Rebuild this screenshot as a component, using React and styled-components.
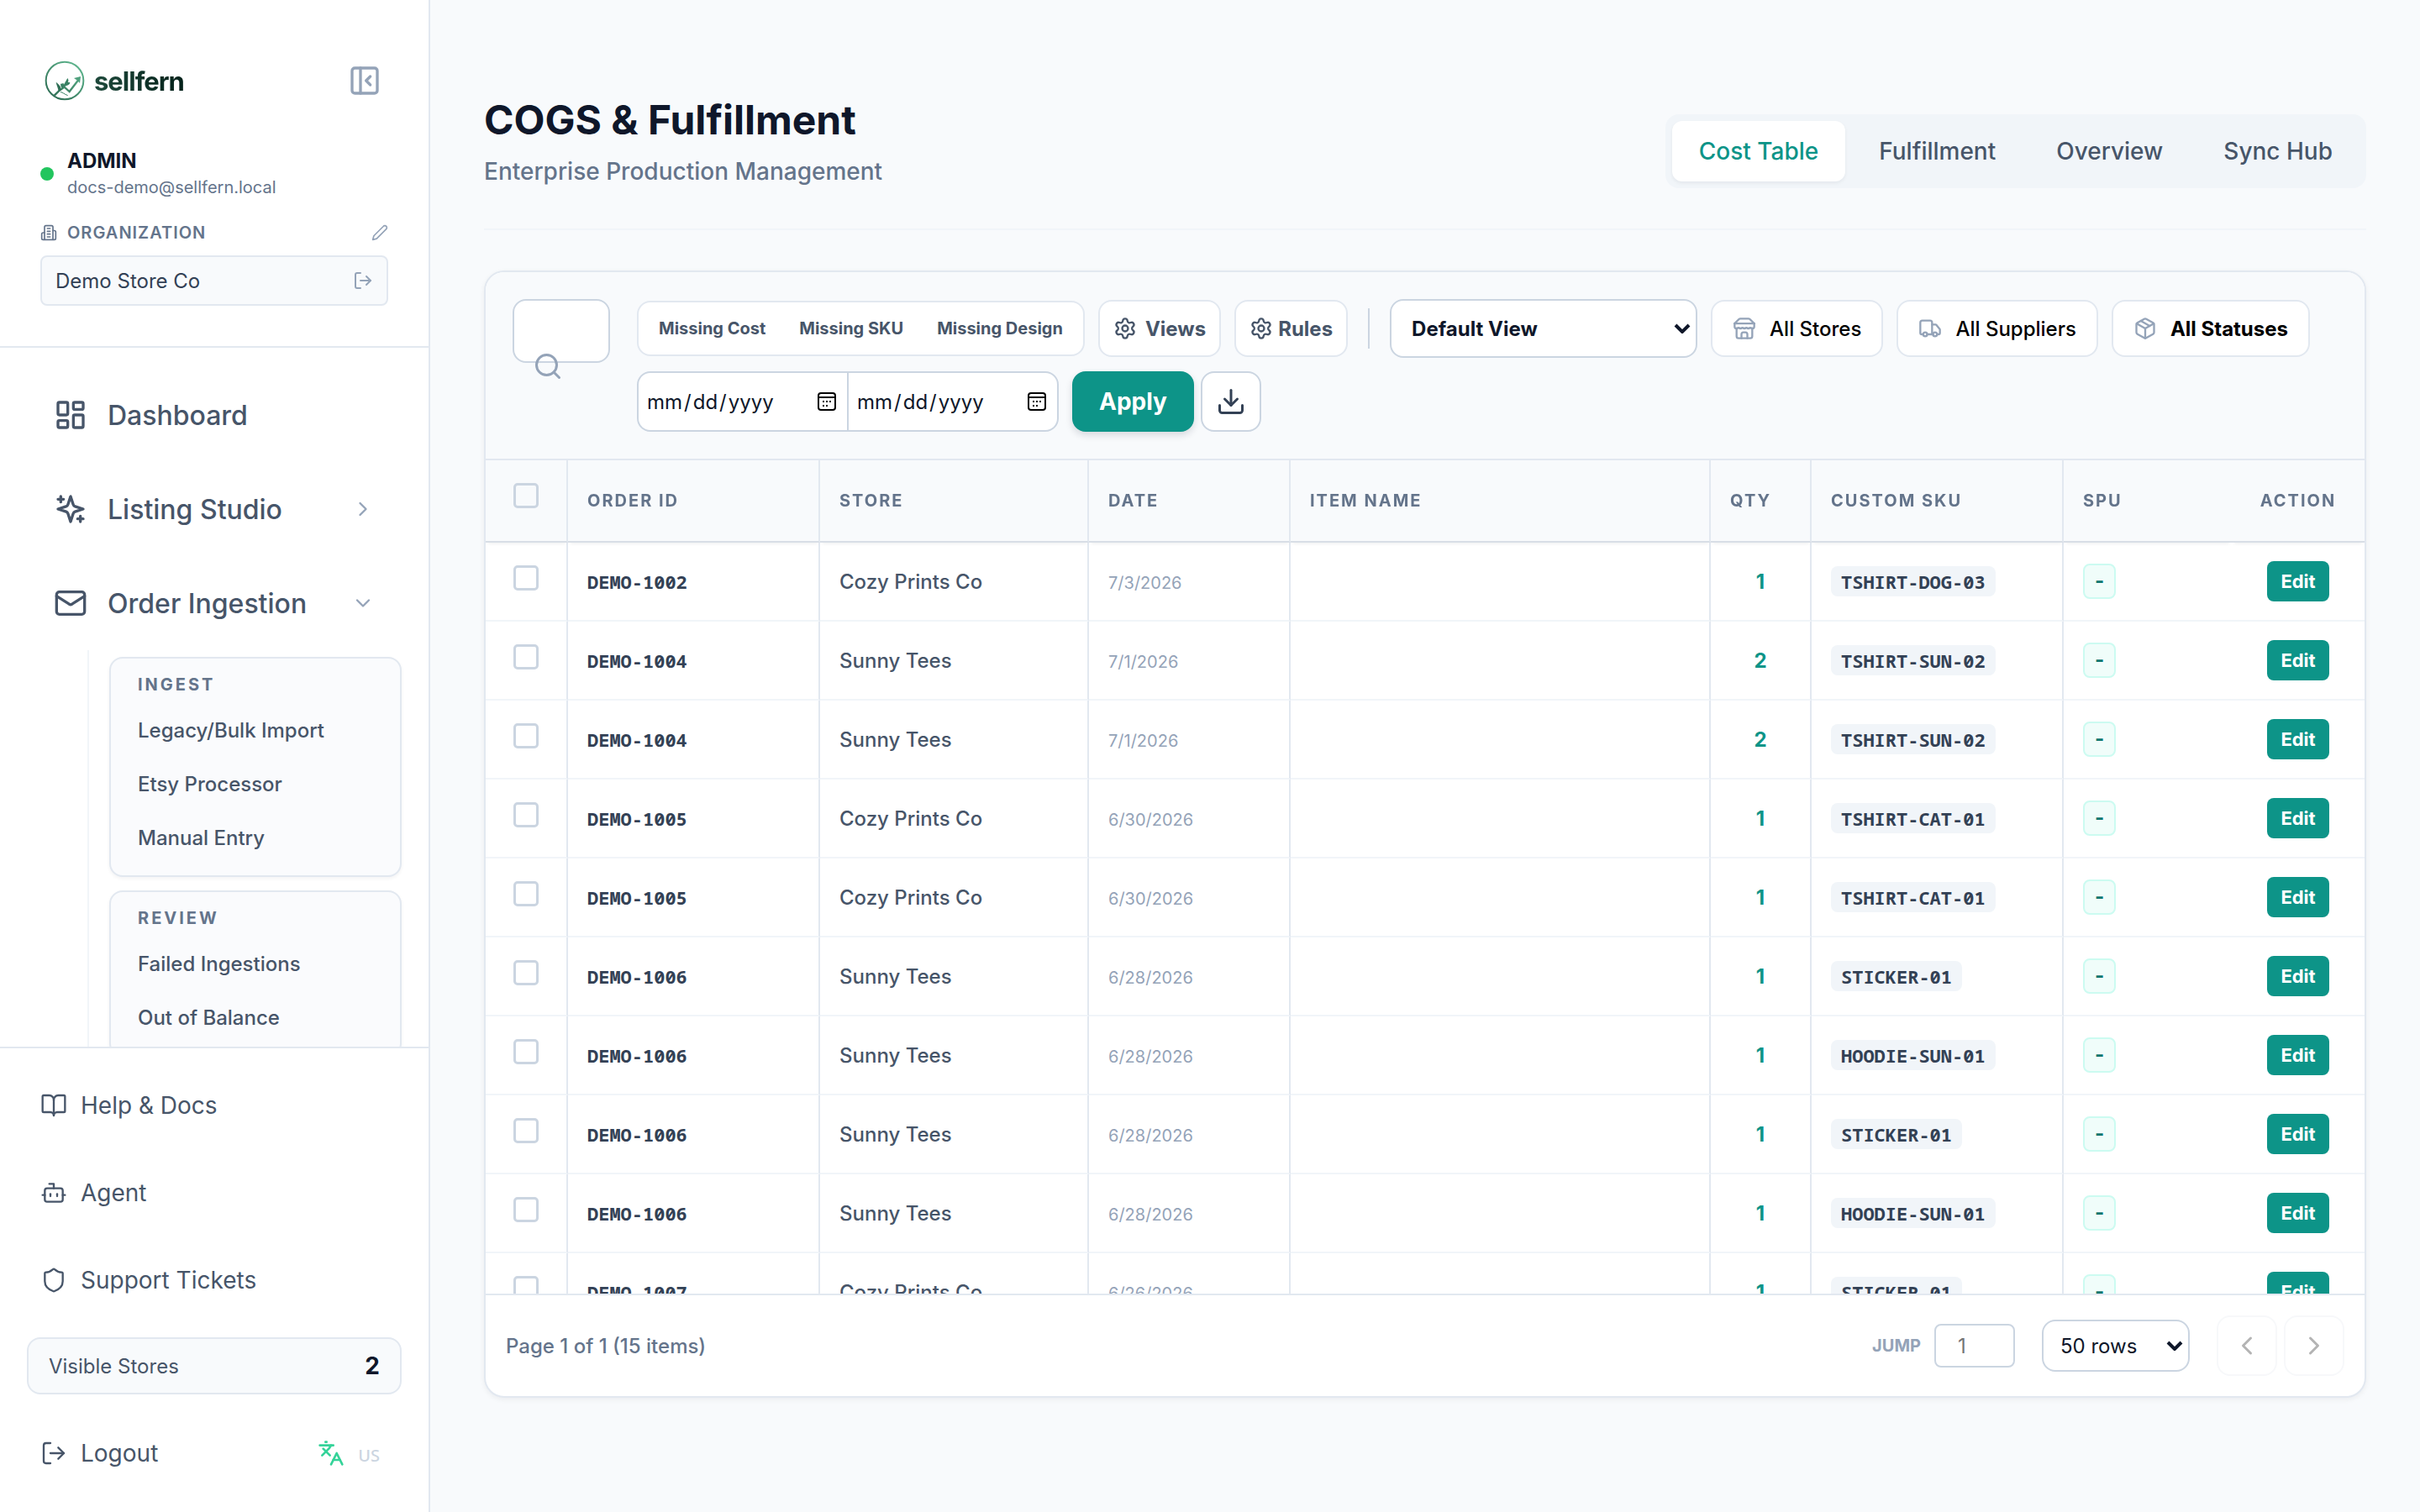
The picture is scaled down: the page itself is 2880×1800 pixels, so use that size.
import React from 'react';
import styled, { createGlobalStyle, css } from 'styled-components';
import {
    BookOpen,
    Bot,
    ChevronDown,
    ChevronLeft,
    ChevronRight,
    Download,
    Languages,
    LayoutDashboard,
    LogOut,
    Mail,
    Package,
    PanelLeftClose,
    Search,
    Settings,
    Shield,
    Truck,
} from 'lucide-react';

const GlobalStyle = createGlobalStyle`
    :root {
        --color-text: #0f172a;
        --color-body: #475569;
        --color-strong: #334155;
        --color-muted: #64748b;
        --color-faint: #94a3b8;
        --color-accent: #0d9488;
        --surface: #f8fafc;
        --surface-2: #f1f5f9;
        --border: #e2e8f0;
        --border-strong: #cbd5e1;
        --font-mono: 'Noto Sans Mono', 'DejaVu Sans Mono', 'Liberation Mono', monospace;
    }

    * {
        box-sizing: border-box;
    }

    body {
        margin: 0;
        background: var(--surface);
        color: var(--color-text);
        font-family: Inter, 'Liberation Sans', sans-serif;
        font-size: 24px;
    }

    button, input, select {
        font-family: inherit;
        margin: 0;
    }

    button {
        cursor: pointer;
    }

    a {
        color: inherit;
        text-decoration: none;
    }
`;

const Layout = styled.div`
    display: flex;
    height: 100vh;
`;

/* ---------- Sidebar ---------- */

const Sidebar = styled.aside`
    display: flex;
    flex-direction: column;
    flex: 0 0 512px;
    background: #fff;
    border-right: 2px solid var(--border);
`;

const SidebarHeader = styled.div`
    padding: 48px;
    border-bottom: 2px solid var(--border);
`;

const BrandRow = styled.div`
    display: flex;
    align-items: center;
    justify-content: space-between;
    height: 96px;
`;

const Brand = styled.a`
    display: flex;
    align-items: center;
    gap: 10px;
    padding-left: 4px;
`;

const BrandName = styled.span`
    font-size: 31px;
    font-weight: 700;
    letter-spacing: -1px;
    background: linear-gradient(90deg, #1f4a3c, #04211a);
    background-clip: text;
    color: transparent;
`;

const IconButton = styled.button`
    display: flex;
    align-items: center;
    justify-content: center;
    width: 56px;
    height: 56px;
    padding: 0;
    border: 0;
    background: transparent;
    color: var(--color-faint);
`;

const UserRow = styled.div`
    display: flex;
    align-items: center;
    gap: 16px;
    margin-top: 32px;
`;

const StatusDot = styled.span`
    width: 16px;
    height: 16px;
    border-radius: 50%;
    background: #22c55e;
`;

const UserName = styled.div`
    font-size: 24px;
    line-height: 32px;
    font-weight: 700;
`;

const UserEmail = styled.div`
    font-size: 20px;
    line-height: 30px;
    color: var(--color-muted);
`;

const OrgRow = styled.div`
    display: flex;
    align-items: center;
    gap: 12px;
    height: 28px;
    margin-top: 25px;
    color: var(--color-muted);
`;

const OrgLabel = styled.span`
    flex: 1;
    font-size: 20px;
    font-weight: 600;
    letter-spacing: 1px;
`;

const SmallButton = styled.button`
    display: flex;
    padding: 0;
    border: 0;
    background: transparent;
    color: var(--color-faint);
`;

const OrgBox = styled.div`
    display: flex;
    align-items: center;
    justify-content: space-between;
    height: 60px;
    margin-top: 13px;
    padding: 0 16px;
    border: 2px solid var(--border);
    border-radius: 8px;
    background: var(--surface);
    color: var(--color-strong);
    font-size: 24px;
`;

const Nav = styled.nav`
    flex: 1;
    min-height: 0;
    padding-top: 24px;
    overflow-y: auto;
    scrollbar-width: none;
`;

const NavItem = styled.a`
    display: flex;
    align-items: center;
    gap: 24px;
    height: 112px;
    padding: 0 64px;
    color: var(--color-body);
    font-size: 32px;
    font-weight: 500;

    span {
        flex: 1;
    }
`;

const NavChevron = styled.i`
    display: flex;
    color: var(--color-faint);
`;

const SubNav = styled.div`
    display: flex;
    flex-direction: column;
    gap: 16px;
    margin-left: 104px;
    padding: 8px 32px 8px 24px;
    border-left: 2px solid var(--surface-2);
`;

const SubCard = styled.div`
    padding: 12px;
    border: 2px solid var(--border);
    border-radius: 16px;
    background: #fafbfd;
    box-shadow: 0 2px 4px rgba(15, 23, 42, 0.05);
`;

const SubTitle = styled.div`
    padding: 4px 20px 8px;
    color: var(--color-muted);
    font-size: 20px;
    line-height: 30px;
    font-weight: 700;
    letter-spacing: 3px;
`;

const SubLink = styled.a`
    display: flex;
    align-items: center;
    height: 64px;
    padding: 0 20px 2px;
    color: var(--color-body);
    font-size: 24px;
    font-weight: 500;
`;

const SidebarFooter = styled.div`
    padding: 16px 32px;
    border-top: 2px solid var(--border);
`;

const FooterItem = styled.a`
    display: flex;
    align-items: center;
    gap: 16px;
    height: 104px;
    padding: 0 16px;
    color: var(--color-body);
    font-size: 28px;
`;

const VisibleStores = styled.div`
    display: flex;
    align-items: center;
    justify-content: space-between;
    height: 68px;
    margin: 16px 0;
    padding: 0 24px;
    border: 2px solid var(--border);
    border-radius: 16px;
    background: var(--surface);
    color: var(--color-body);
    font-size: 24px;

    strong {
        color: var(--color-text);
        font-size: 28px;
        font-weight: 700;
    }
`;

const LogoutRow = styled.div`
    display: flex;
    align-items: center;
    justify-content: space-between;
    height: 108px;
`;

const LanguageButton = styled.button`
    display: flex;
    align-items: flex-end;
    gap: 16px;
    padding: 0 26px 0 0;
    border: 0;
    background: transparent;
    color: var(--border-strong);
    font-family: 'Noto Sans', Inter, sans-serif;
    font-size: 20px;
    font-weight: 500;

    svg {
        color: #34d399;
    }
`;

/* ---------- Main ---------- */

const Main = styled.main`
    display: flex;
    flex-direction: column;
    flex: 1;
    min-width: 0;
    padding: 114px 64px 136px;
`;

const PageHeader = styled.header`
    display: flex;
    align-items: flex-end;
    justify-content: space-between;
    padding-bottom: 48px;
    border-bottom: 2px solid var(--surface-2);
`;

const PageTitle = styled.h1`
    margin: 0 0 12px;
    font-size: 48px;
    line-height: 58px;
    font-weight: 700;
`;

const PageSubtitle = styled.p`
    margin: 0;
    color: var(--color-muted);
    font-size: 28px;
    line-height: 40px;
    font-weight: 500;
`;

const Tabs = styled.div`
    display: flex;
    gap: 8px;
    padding: 8px;
    border-radius: 16px;
    background: var(--surface-2);
`;

const Tab = styled.button`
    height: 72px;
    padding: 0 32px;
    border: 0;
    border-radius: 12px;
    background: ${({ $active }) => ($active ? '#fff' : 'transparent')};
    box-shadow: ${({ $active }) => ($active ? '0 2px 4px rgba(15, 23, 42, 0.06)' : 'none')};
    color: ${({ $active }) => ($active ? 'var(--color-accent)' : 'var(--color-body)')};
    font-size: 28px;
    font-weight: 500;
`;

const Card = styled.section`
    display: flex;
    flex-direction: column;
    flex: 1;
    min-height: 0;
    margin-top: 48px;
    border: 2px solid var(--border);
    border-radius: 24px;
    background: #fff;
    box-shadow: 0 2px 6px rgba(15, 23, 42, 0.06);
    overflow: hidden;
`;

const Toolbar = styled.div`
    display: flex;
    align-items: flex-start;
    gap: 32px;
    padding: 32px;
    border-bottom: 2px solid var(--border);
    background: var(--surface);
`;

const SearchBox = styled.label`
    position: relative;
    flex: 0 0 116px;

    svg {
        position: absolute;
        top: 62px;
        left: 24px;
        color: var(--color-faint);
    }
`;

const SearchInput = styled.input`
    display: block;
    width: 100%;
    height: 76px;
    padding: 0 16px;
    border: 2px solid var(--border-strong);
    border-radius: 16px;
    background: #fff;
    font-size: 24px;
`;

const Filters = styled.div`
    display: flex;
    flex-wrap: wrap;
    align-items: center;
    gap: 16px;
`;

const Segment = styled.div`
    display: flex;
    gap: 8px;
    height: 66px;
    padding: 0 8px;
    border: 2px solid var(--border);
    border-radius: 16px;
    background: #fff;
`;

const SegmentButton = styled.button`
    padding: 0 16px;
    border: 0;
    background: transparent;
    color: var(--color-body);
    font-size: 20px;
    font-weight: 700;
`;

const ToolButton = styled.button`
    display: flex;
    align-items: center;
    gap: ${({ $gap }) => $gap || '10px'};
    height: 68px;
    padding: 0 16px;
    border: 2px solid var(--border);
    border-radius: 16px;
    background: #fff;
    color: var(--color-body);
    font-size: 24px;
    font-weight: 700;
`;

const FilterButton = styled(ToolButton)`
    gap: 16px;
    padding: 0 24px;
    color: #000;
    font-weight: ${({ $strong }) => ($strong ? 700 : 500)};

    svg {
        color: var(--color-faint);
    }
`;

const Divider = styled.span`
    width: 2px;
    height: 48px;
    margin: 0 8px;
    background: var(--border-strong);
`;

const SelectWrap = styled.span`
    position: relative;
    display: flex;
    width: ${({ $width }) => $width};

    svg {
        position: absolute;
        top: 50%;
        right: 8px;
        margin-top: -6px;
        pointer-events: none;
    }
`;

const Select = styled.select`
    width: 100%;
    height: ${({ $compact }) => ($compact ? '62px' : '70px')};
    padding: 0 ${({ $compact }) => ($compact ? '20px' : '24px')};
    border: 2px solid var(--border-strong);
    border-radius: 16px;
    background: #fff;
    color: var(--color-text);
    font-size: 24px;
    font-weight: ${({ $compact }) => ($compact ? 400 : 700)};
    appearance: none;
`;

const DateRange = styled.div`
    display: flex;
    width: 502px;
    height: 72px;
    border: 2px solid var(--border-strong);
    border-radius: 16px;
    background: #fff;
    overflow: hidden;
`;

const DateField = styled.label`
    position: relative;
    display: flex;
    flex: 1;

    & + & {
        border-left: 2px solid var(--border-strong);
    }

    svg {
        position: absolute;
        top: 50%;
        right: 12px;
        margin-top: -11px;
        pointer-events: none;
    }
`;

const DateInput = styled.input`
    width: 100%;
    padding: 0 12px 0 8px;
    border: 0;
    background: transparent;
    color: var(--color-text);
    font-size: 24px;

    &::-webkit-calendar-picker-indicator {
        opacity: 0;
    }

    &::-webkit-datetime-edit-month-field,
    &::-webkit-datetime-edit-day-field,
    &::-webkit-datetime-edit-year-field {
        padding: 0 2px;
    }
`;

const Actions = styled.div`
    display: flex;
    gap: 8px;
`;

const ApplyButton = styled.button`
    height: 72px;
    padding: 0 32px;
    border: 0;
    border-radius: 16px;
    background: var(--color-accent);
    box-shadow: 0 4px 8px rgba(15, 23, 42, 0.14);
    color: #fff;
    font-size: 28px;
    font-weight: 700;
`;

const SquareButton = styled.button`
    display: flex;
    align-items: center;
    justify-content: center;
    width: 72px;
    height: 72px;
    padding: 0;
    border: 2px solid var(--border-strong);
    border-radius: 16px;
    background: #fff;
    color: var(--color-strong);

    &:disabled {
        border-color: #f7f8fa;
        color: #b4b4b4;
    }
`;

const TableScroll = styled.div`
    flex: 1;
    min-height: 0;
    overflow-y: auto;
    scrollbar-width: none;
`;

const Table = styled.table`
    width: 100%;
    table-layout: fixed;
    border-collapse: separate;
    border-spacing: 0;
`;

const cellBase = css`
    padding: 0 ${({ $tight }) => ($tight ? '0' : '23px')};
    border-right: ${({ $open }) => ($open ? '0' : '2px solid var(--border)')};
    text-align: ${({ $align }) => $align || 'left'};
    white-space: nowrap;
`;

const Th = styled.th`
    ${cellBase}
    position: sticky;
    top: 0;
    height: 98px;
    border-bottom: 2px solid #d8dee6;
    background: var(--surface);
    box-shadow: 0 4px 4px -3px rgba(15, 23, 42, 0.08);
    color: var(--color-muted);
    font-size: 20px;
    font-weight: 700;
    letter-spacing: 2px;
`;

const Td = styled.td`
    ${cellBase}
    height: 94px;
    border-bottom: 2px solid var(--surface-2);
    color: var(--color-body);
    font-size: 24px;
    font-weight: 500;
`;

const Checkbox = styled.input`
    display: block;
    width: 30px;
    height: 30px;
    margin: 0 auto 8px;
    border: 3px solid var(--border-strong);
    border-radius: 5px;
    appearance: none;

    th & {
        margin-bottom: 12px;
    }
`;

const OrderId = styled.span`
    color: var(--color-strong);
    font-family: var(--font-mono);
    font-size: 22px;
    font-weight: 700;
`;

const DateText = styled.span`
    color: var(--color-faint);
    font-size: 20px;
    font-weight: 400;
`;

const Qty = styled.span`
    color: var(--color-accent);
    font-weight: 700;
`;

const Sku = styled.code`
    display: inline-block;
    padding: 0 12px;
    border-radius: 8px;
    background: var(--surface-2);
    color: var(--color-strong);
    font-family: var(--font-mono);
    font-size: 22px;
    line-height: 36px;
    font-weight: 700;
`;

const Spu = styled.span`
    display: inline-block;
    padding: 0 12px;
    border: 2px solid #ccfbf1;
    border-radius: 8px;
    background: #f0fdfa;
    color: #0f766e;
    font-size: 24px;
    line-height: 38px;
    font-weight: 700;
`;

const EditButton = styled.button`
    height: 48px;
    padding: 0 16px;
    border: 0;
    border-radius: 8px;
    background: var(--color-accent);
    color: #fff;
    font-size: 22px;
    font-weight: 700;
`;

const TableFooter = styled.footer`
    display: flex;
    align-items: center;
    justify-content: space-between;
    height: 122px;
    padding: 0 24px;
    border-top: 2px solid var(--border);
    color: var(--color-muted);
    font-size: 24px;
    font-weight: 500;
`;

const Pager = styled.div`
    display: flex;
    align-items: center;
    gap: 32px;
`;

const PagerButtons = styled.div`
    display: flex;
    gap: 8px;
`;

const Jump = styled.label`
    display: flex;
    align-items: center;
    gap: 16px;
    color: var(--color-faint);
    font-size: 20px;
    font-weight: 700;
`;

const JumpInput = styled.input`
    width: 96px;
    height: 52px;
    padding: 0 26px;
    border: 2px solid var(--border-strong);
    border-radius: 8px;
    background: #fff;
    font-size: 24px;
`;

/* ---------- Icons ---------- */

const LineIcon = ({ size, children, strokeWidth = 2 }) => (
    <svg
        width={size}
        height={size}
        viewBox="0 0 24 24"
        fill="none"
        stroke="currentColor"
        strokeWidth={strokeWidth}
        strokeLinecap="round"
        strokeLinejoin="round"
        aria-hidden="true"
    >
        {children}
    </svg>
);

const BuildingIcon = ({ size }) => (
    <LineIcon size={size}>
        <path d="M6 22V4a2 2 0 0 1 2-2h8a2 2 0 0 1 2 2v18Z" />
        <path d="M6 12H4a2 2 0 0 0-2 2v6a2 2 0 0 0 2 2h2" />
        <path d="M18 9h2a2 2 0 0 1 2 2v9a2 2 0 0 1-2 2h-2" />
        <path d="M10 6h4M10 10h4M10 14h4M10 18h4" />
    </LineIcon>
);

const PenIcon = ({ size }) => (
    <LineIcon size={size}>
        <path d="M17 3a2.85 2.83 0 1 1 4 4L7.5 20.5 2 22l1.5-5.5Z" />
    </LineIcon>
);

const SparklesIcon = ({ size }) => (
    <LineIcon size={size}>
        <path d="m12 3-1.912 5.813a2 2 0 0 1-1.275 1.275L3 12l5.813 1.912a2 2 0 0 1 1.275 1.275L12 21l1.912-5.813a2 2 0 0 1 1.275-1.275L21 12l-5.813-1.912a2 2 0 0 1-1.275-1.275L12 3Z" />
        <path d="M5 3v4M19 17v4M3 5h4M17 19h4" />
    </LineIcon>
);

const StoreIcon = ({ size }) => (
    <LineIcon size={size}>
        <path d="m2 7 4.41-4.41A2 2 0 0 1 7.83 2h8.34a2 2 0 0 1 1.42.59L22 7" />
        <path d="M4 12v8a2 2 0 0 0 2 2h12a2 2 0 0 0 2-2v-8" />
        <path d="M15 22v-4a2 2 0 0 0-2-2h-2a2 2 0 0 0-2 2v4" />
        <path d="M2 7h20" />
        <path d="M22 7v3a2 2 0 0 1-2 2a2.7 2.7 0 0 1-1.59-.63.7.7 0 0 0-.82 0A2.7 2.7 0 0 1 16 12a2.7 2.7 0 0 1-1.59-.63.7.7 0 0 0-.82 0A2.7 2.7 0 0 1 12 12a2.7 2.7 0 0 1-1.59-.63.7.7 0 0 0-.82 0A2.7 2.7 0 0 1 8 12a2.7 2.7 0 0 1-1.59-.63.7.7 0 0 0-.82 0A2.7 2.7 0 0 1 4 12a2 2 0 0 1-2-2V7" />
    </LineIcon>
);

const CalendarIcon = () => (
    <svg width="24" height="22" viewBox="0 0 24 22" fill="none" aria-hidden="true">
        <rect x="2" y="1" width="20" height="20" rx="3" stroke="#000" strokeWidth="2" />
        <path d="M2 6h20" stroke="#000" strokeWidth="2" />
        <path d="M7 11h2M11 11h2M15 11h2M7 16h2M11 16h2" stroke="#000" strokeWidth="2" />
    </svg>
);

const SelectArrow = () => (
    <svg width="20" height="12" viewBox="0 0 20 12" fill="none" aria-hidden="true">
        <path d="M2 2l8 8 8-8" stroke="#0f172a" strokeWidth="4" />
    </svg>
);

const FernLogo = () => (
    <svg width="50" height="50" viewBox="0 0 150 150" fill="none" aria-hidden="true">
        <defs>
            <linearGradient id="fern" x1="30" y1="130" x2="120" y2="20" gradientUnits="userSpaceOnUse">
                <stop offset="0" stopColor="#2f6f55" />
                <stop offset="1" stopColor="#5db38c" />
            </linearGradient>
        </defs>
        <circle cx="75" cy="75" r="67" stroke="url(#fern)" strokeWidth="6" />
        <path d="M38 128 54 112 74 98 92 114 126 70" stroke="url(#fern)" strokeWidth="7" />
        <path d="m108 66 24-6-3 24-8-9Z" fill="#4fa17d" />
        <path d="M44 80c10 8 17 14 19 28l-10 6c-1-12-7-21-9-34Z" fill="#2f6f55" />
        <path d="M60 86c4 0 8-1 10-3l2 6 13-23c5 6 3 11 2 15l7 0c-1 8-6 11-13 12l-17 9c-2-5-4-11-4-16Z" fill="#3a8265" />
        <path d="M60 116c8 0 12 7 26 12" stroke="#3a8265" strokeWidth="3" />
    </svg>
);

/* ---------- Data ---------- */

const subNav = [
    { title: 'INGEST', links: ['Legacy/Bulk Import', 'Etsy Processor', 'Manual Entry'] },
    { title: 'REVIEW', links: ['Failed Ingestions', 'Out of Balance'] },
];

const tabs = ['Cost Table', 'Fulfillment', 'Overview', 'Sync Hub'];

const orders = [
    ['DEMO-1002', 'Cozy Prints Co', '7/3/2026', 1, 'TSHIRT-DOG-03'],
    ['DEMO-1004', 'Sunny Tees', '7/1/2026', 2, 'TSHIRT-SUN-02'],
    ['DEMO-1004', 'Sunny Tees', '7/1/2026', 2, 'TSHIRT-SUN-02'],
    ['DEMO-1005', 'Cozy Prints Co', '6/30/2026', 1, 'TSHIRT-CAT-01'],
    ['DEMO-1005', 'Cozy Prints Co', '6/30/2026', 1, 'TSHIRT-CAT-01'],
    ['DEMO-1006', 'Sunny Tees', '6/28/2026', 1, 'STICKER-01'],
    ['DEMO-1006', 'Sunny Tees', '6/28/2026', 1, 'HOODIE-SUN-01'],
    ['DEMO-1006', 'Sunny Tees', '6/28/2026', 1, 'STICKER-01'],
    ['DEMO-1006', 'Sunny Tees', '6/28/2026', 1, 'HOODIE-SUN-01'],
    ['DEMO-1007', 'Cozy Prints Co', '6/26/2026', 1, 'STICKER-01'],
];

/* ---------- Sections ---------- */

const AppSidebar = () => (
    <Sidebar>
        <SidebarHeader>
            <BrandRow>
                <Brand href="#">
                    <FernLogo />
                    <BrandName>sellfern</BrandName>
                </Brand>
                <IconButton type="button" aria-label="Collapse sidebar">
                    <PanelLeftClose size={40} />
                </IconButton>
            </BrandRow>
            <UserRow>
                <StatusDot />
                <div>
                    <UserName>ADMIN</UserName>
                    <UserEmail>docs-demo@sellfern.local</UserEmail>
                </div>
            </UserRow>
            <OrgRow>
                <BuildingIcon size={20} />
                <OrgLabel>ORGANIZATION</OrgLabel>
                <SmallButton type="button" aria-label="Edit organization">
                    <PenIcon size={20} />
                </SmallButton>
            </OrgRow>
            <OrgBox>
                Demo Store Co
                <SmallButton type="button" aria-label="Leave organization">
                    <LogOut size={24} />
                </SmallButton>
            </OrgBox>
        </SidebarHeader>

        <Nav>
            <NavItem href="#">
                <LayoutDashboard size={40} />
                <span>Dashboard</span>
            </NavItem>
            <NavItem href="#">
                <SparklesIcon size={40} />
                <span>Listing Studio</span>
                <NavChevron><ChevronRight size={28} /></NavChevron>
            </NavItem>
            <NavItem href="#">
                <Mail size={40} />
                <span>Order Ingestion</span>
                <NavChevron><ChevronDown size={28} /></NavChevron>
            </NavItem>
            <SubNav>
                {subNav.map((group) => (
                    <SubCard key={group.title}>
                        <SubTitle>{group.title}</SubTitle>
                        {group.links.map((link) => (
                            <SubLink key={link} href="#">{link}</SubLink>
                        ))}
                    </SubCard>
                ))}
            </SubNav>
        </Nav>

        <SidebarFooter>
            <FooterItem href="#"><BookOpen size={32} strokeWidth={1.75} />Help &amp; Docs</FooterItem>
            <FooterItem href="#"><Bot size={32} strokeWidth={1.75} />Agent</FooterItem>
            <FooterItem href="#"><Shield size={32} strokeWidth={1.75} />Support Tickets</FooterItem>
            <VisibleStores>
                Visible Stores
                <strong>2</strong>
            </VisibleStores>
            <LogoutRow>
                <FooterItem href="#"><LogOut size={32} strokeWidth={1.75} />Logout</FooterItem>
                <LanguageButton type="button">
                    <Languages size={32} />
                    US
                </LanguageButton>
            </LogoutRow>
        </SidebarFooter>
    </Sidebar>
);

const FilterBar = () => (
    <Toolbar>
        <SearchBox>
            <SearchInput type="text" aria-label="Search orders" />
            <Search size={36} />
        </SearchBox>
        <Filters>
            <Segment>
                <SegmentButton type="button">Missing Cost</SegmentButton>
                <SegmentButton type="button">Missing SKU</SegmentButton>
                <SegmentButton type="button">Missing Design</SegmentButton>
            </Segment>
            <ToolButton type="button"><Settings size={28} />Views</ToolButton>
            <ToolButton type="button" $gap="6px"><Settings size={28} />Rules</ToolButton>
            <Divider />
            <SelectWrap $width="366px">
                <Select aria-label="Saved view" defaultValue="default">
                    <option value="default">Default View</option>
                </Select>
                <SelectArrow />
            </SelectWrap>
            <FilterButton type="button"><StoreIcon size={28} />All Stores</FilterButton>
            <FilterButton type="button"><Truck size={28} />All Suppliers</FilterButton>
            <FilterButton type="button" $strong><Package size={28} />All Statuses</FilterButton>
            <DateRange>
                <DateField>
                    <DateInput type="date" aria-label="From date" />
                    <CalendarIcon />
                </DateField>
                <DateField>
                    <DateInput type="date" aria-label="To date" />
                    <CalendarIcon />
                </DateField>
            </DateRange>
            <Actions>
                <ApplyButton type="button">Apply</ApplyButton>
                <SquareButton type="button" aria-label="Download">
                    <Download size={36} />
                </SquareButton>
            </Actions>
        </Filters>
    </Toolbar>
);

const OrdersTable = () => (
    <TableScroll>
        <Table>
            <colgroup>
                <col width="98" />
                <col width="300" />
                <col width="320" />
                <col width="240" />
                <col />
                <col width="120" />
                <col width="300" />
                <col width="200" />
                <col width="158" />
            </colgroup>
            <thead>
                <tr>
                    <Th $tight><Checkbox type="checkbox" aria-label="Select all" /></Th>
                    <Th>ORDER ID</Th>
                    <Th>STORE</Th>
                    <Th>DATE</Th>
                    <Th>ITEM NAME</Th>
                    <Th>QTY</Th>
                    <Th>CUSTOM SKU</Th>
                    <Th $open>SPU</Th>
                    <Th $open $tight $align="center">ACTION</Th>
                </tr>
            </thead>
            <tbody>
                {orders.map(([id, store, date, qty, sku], index) => (
                    <tr key={index}>
                        <Td $tight><Checkbox type="checkbox" aria-label={`Select ${id}`} /></Td>
                        <Td><OrderId>{id}</OrderId></Td>
                        <Td>{store}</Td>
                        <Td><DateText>{date}</DateText></Td>
                        <Td />
                        <Td $align="center"><Qty>{qty}</Qty></Td>
                        <Td><Sku>{sku}</Sku></Td>
                        <Td $open><Spu>-</Spu></Td>
                        <Td $open $tight $align="center"><EditButton type="button">Edit</EditButton></Td>
                    </tr>
                ))}
            </tbody>
        </Table>
    </TableScroll>
);

const Pagination = () => (
    <TableFooter>
        <span>Page 1 of 1 (15 items)</span>
        <Pager>
            <Jump>
                JUMP
                <JumpInput type="text" inputMode="numeric" placeholder="1" />
            </Jump>
            <SelectWrap $width="176px">
                <Select $compact aria-label="Rows per page" defaultValue="50">
                    <option value="50">50 rows</option>
                </Select>
                <SelectArrow />
            </SelectWrap>
            <PagerButtons>
                <SquareButton type="button" aria-label="Previous page" disabled>
                    <ChevronLeft size={36} />
                </SquareButton>
                <SquareButton type="button" aria-label="Next page" disabled>
                    <ChevronRight size={36} />
                </SquareButton>
            </PagerButtons>
        </Pager>
    </TableFooter>
);

const App = () => {
    return (
        <>
            <GlobalStyle />
            <Layout>
                <AppSidebar />
                <Main>
                    <PageHeader>
                        <div>
                            <PageTitle>COGS &amp; Fulfillment</PageTitle>
                            <PageSubtitle>Enterprise Production Management</PageSubtitle>
                        </div>
                        <Tabs>
                            {tabs.map((tab, index) => (
                                <Tab key={tab} type="button" $active={index === 0}>{tab}</Tab>
                            ))}
                        </Tabs>
                    </PageHeader>
                    <Card>
                        <FilterBar />
                        <OrdersTable />
                        <Pagination />
                    </Card>
                </Main>
            </Layout>
        </>
    );
};

export default App;
